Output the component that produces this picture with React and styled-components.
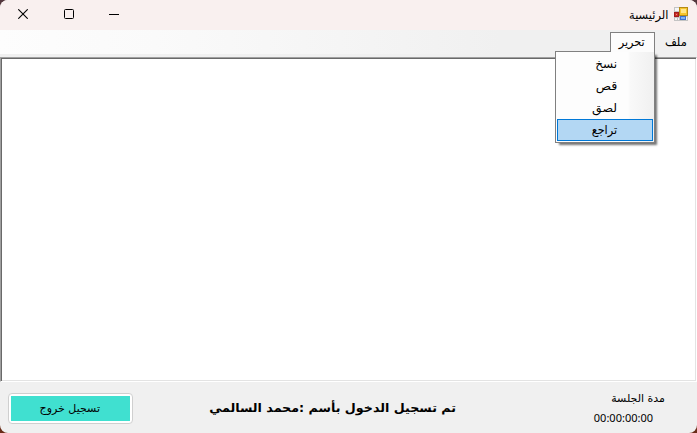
import React from 'react';
import styled, { createGlobalStyle } from 'styled-components';

const GlobalStyle = createGlobalStyle`
  * { box-sizing: border-box; }
  html, body { margin: 0; background: #5a3434; overflow: hidden; }
`;
const Desktop = styled.div`
  width: 697px;
  height: 433px;
  background: linear-gradient(#54383e, #6a2c18);
`;
const Window = styled.main`
  width: 697px;
  height: 433px;
  display: flex;
  flex-direction: column;
  background: #f0f0f0;
  border-radius: 8px;
  overflow: hidden;
  color: #000;
  font-family: "DejaVu Sans", sans-serif;
  font-size: 11px;
`;
const Text = styled.span`
  display: block;
  flex: none;
  direction: rtl;
  white-space: nowrap;
  line-height: 16px;
  font-size: ${(p) => p.$size || 11}px;
  font-weight: ${(p) => (p.$bold ? 700 : 400)};
  transform: scaleX(${(p) => p.$stretch || 1});
  transform-origin: right;
`;
const TitleBar = styled.header`
  height: 30px;
  flex: none;
  display: flex;
  justify-content: space-between;
  background: #f9f0ef;
`;
const Controls = styled.div`
  display: flex;
`;
const Control = styled.button`
  width: 46px;
  height: 28px;
  padding: 0;
  border: 0;
  background: none;
  display: grid;
  place-items: center;
  svg { display: block; }
`;
const Caption = styled.div`
  display: flex;
  gap: 6px;
  padding: 7px 9px 0 0;
`;
const MenuBar = styled.nav`
  height: 24px;
  flex: none;
  display: flex;
  flex-direction: row-reverse;
  padding: 2px 0 0;
  background: linear-gradient(90deg, #fdfdfd 0, #fafafa 155px, #f5f5f5 340px, #f0f0f0 500px);
`;
const MenuItem = styled.div`
  position: relative;
  width: ${(p) => p.$width}px;
  height: 20px;
  display: flex;
  justify-content: flex-end;
  padding: 1px ${(p) => p.$pad}px 0 0;
  border: 1px solid ${(p) => (p.$open ? '#808080' : 'transparent')};
  border-bottom: 0;
  background: ${(p) => (p.$open ? '#fcfcfc' : 'transparent')};
`;
const Dropdown = styled.div`
  position: absolute;
  z-index: 2;
  top: 18px;
  right: -1px;
  width: 100px;
  height: 92px;
  padding: 1px;
  border: 1px solid #808080;
  background: linear-gradient(90deg, #fdfdfd 72px, #f9f9f9 74px, #f0f0f0 98px);
  box-shadow: 3px 3px 2px -1px rgba(0, 0, 0, 0.55);
  &::before {
    content: "";
    position: absolute;
    top: -1px;
    right: 0;
    width: 43px;
    height: 1px;
    background: #fcfcfc;
  }
`;
const Option = styled.div`
  height: 22px;
  display: flex;
  justify-content: flex-end;
  padding: 2px 35px 0 0;
  border: 1px solid ${(p) => (p.$active ? '#0078d7' : 'transparent')};
  background: ${(p) => (p.$active ? '#b3d7f3' : 'transparent')};
`;
const Editor = styled.section`
  height: 325px;
  flex: none;
  margin-top: 3px;
  background: #fff;
  border: 1px solid;
  border-color: #a0a0a0 #fff #fff #a0a0a0;
  box-shadow: inset 1px 1px #696969, inset -1px -1px #e3e3e3;
`;
const Footer = styled.footer`
  flex: 1;
  display: grid;
  grid-template-columns: 132px 324px 209px;
`;
const LogoutFrame = styled.button`
  width: 125px;
  height: 31px;
  margin: 11px 0 0 8px;
  padding: 2px;
  border: 1px solid #cfcfcf;
  border-radius: 4px;
  background: #fff;
  color: #000;
  font-family: inherit;
`;
const LogoutFace = styled.span`
  display: flex;
  width: 119px;
  height: 25px;
  justify-content: flex-end;
  padding: 5px 30px 0 0;
  background: #40e0d0;
`;
const Status = styled.div`
  display: flex;
  justify-content: flex-end;
  padding-top: 18px;
`;
const Session = styled.div`
  display: flex;
  flex-direction: column;
  align-items: flex-end;
  padding-top: 9px;
`;
const Timer = styled.div`
  padding: 3px 12px 0 0;
  font-family: "Noto Sans", sans-serif;
`;

const options = [
  { label: 'نسخ', size: 12 },
  { label: 'قص', size: 12, stretch: 1.06 },
  { label: 'لصق', size: 12, stretch: 1.04 },
  { label: 'تراجع', size: 12, stretch: 0.94, active: true },
];

function FormIcon() {
  return (
    <svg width="14" height="14" viewBox="0 0 14 14" shapeRendering="crispEdges">
      <path fill="#c4c4c4" d="M0 0h14v14H0z" />
      <path fill="#f5f5f5" d="M1 1h4v3H1zM1 11h2v2H1zM4 11h1v2H4zM12 10h1v3h-1z" />
      <path fill="#a51c1c" d="M0 5h5v5H0z" />
      <path fill="#c83028" d="M1 6h3v3H1z" />
      <path fill="#ef8a80" d="M2 7h1v1H2z" />
      <path fill="#b58a13" d="M5 0h9v9H5z" />
      <path fill="#f6c52e" d="M6 1h7v7H6z" />
      <path fill="#ffe68a" d="M7 2h5v4H7z" />
      <path fill="#3d72cf" d="M6 9h6v4H6z" />
      <path fill="#80b1f5" d="M7 10h4v2H7z" />
    </svg>
  );
}

export default function App() {
  return (
    <Desktop>
      <GlobalStyle />
      <Window>
        <TitleBar>
          <Controls>
            <Control aria-label="إغلاق">
              <svg width="10" height="10"><path d="M.3.3l9.4 9.4M9.7.3L.3 9.7" stroke="#000" strokeWidth="1.1" /></svg>
            </Control>
            <Control aria-label="تكبير">
              <svg width="10" height="10"><rect x=".5" y=".5" width="9" height="9" rx="1" fill="none" stroke="#000" /></svg>
            </Control>
            <Control aria-label="تصغير">
              <svg width="12" height="10"><path d="M0 5.5h10" stroke="#000" /></svg>
            </Control>
          </Controls>
          <Caption>
            <Text $size={12} $stretch={0.95}>الرئيسية</Text>
            <FormIcon />
          </Caption>
        </TitleBar>
        <MenuBar>
          <MenuItem $width={42} $pad={9}><Text $size={12} $stretch={0.96}>ملف</Text></MenuItem>
          <MenuItem $width={45} $pad={9} $open>
            <Text $size={12} $stretch={0.94}>تحرير</Text>
            <Dropdown>
              {options.map((o) => (
                <Option key={o.label} $active={o.active}>
                  <Text $size={o.size} $stretch={o.stretch}>{o.label}</Text>
                </Option>
              ))}
            </Dropdown>
          </MenuItem>
        </MenuBar>
        <Editor />
        <Footer>
          <LogoutFrame><LogoutFace><Text>تسجيل خروج</Text></LogoutFace></LogoutFrame>
          <Status><Text $bold $size={12} $stretch={1.055}>تم تسجيل الدخول بأسم :محمد السالمي</Text></Status>
          <Session>
            <Text>مدة الجلسة</Text>
            <Timer><Text>00:00:00:00</Text></Timer>
          </Session>
        </Footer>
      </Window>
    </Desktop>
  );
}
